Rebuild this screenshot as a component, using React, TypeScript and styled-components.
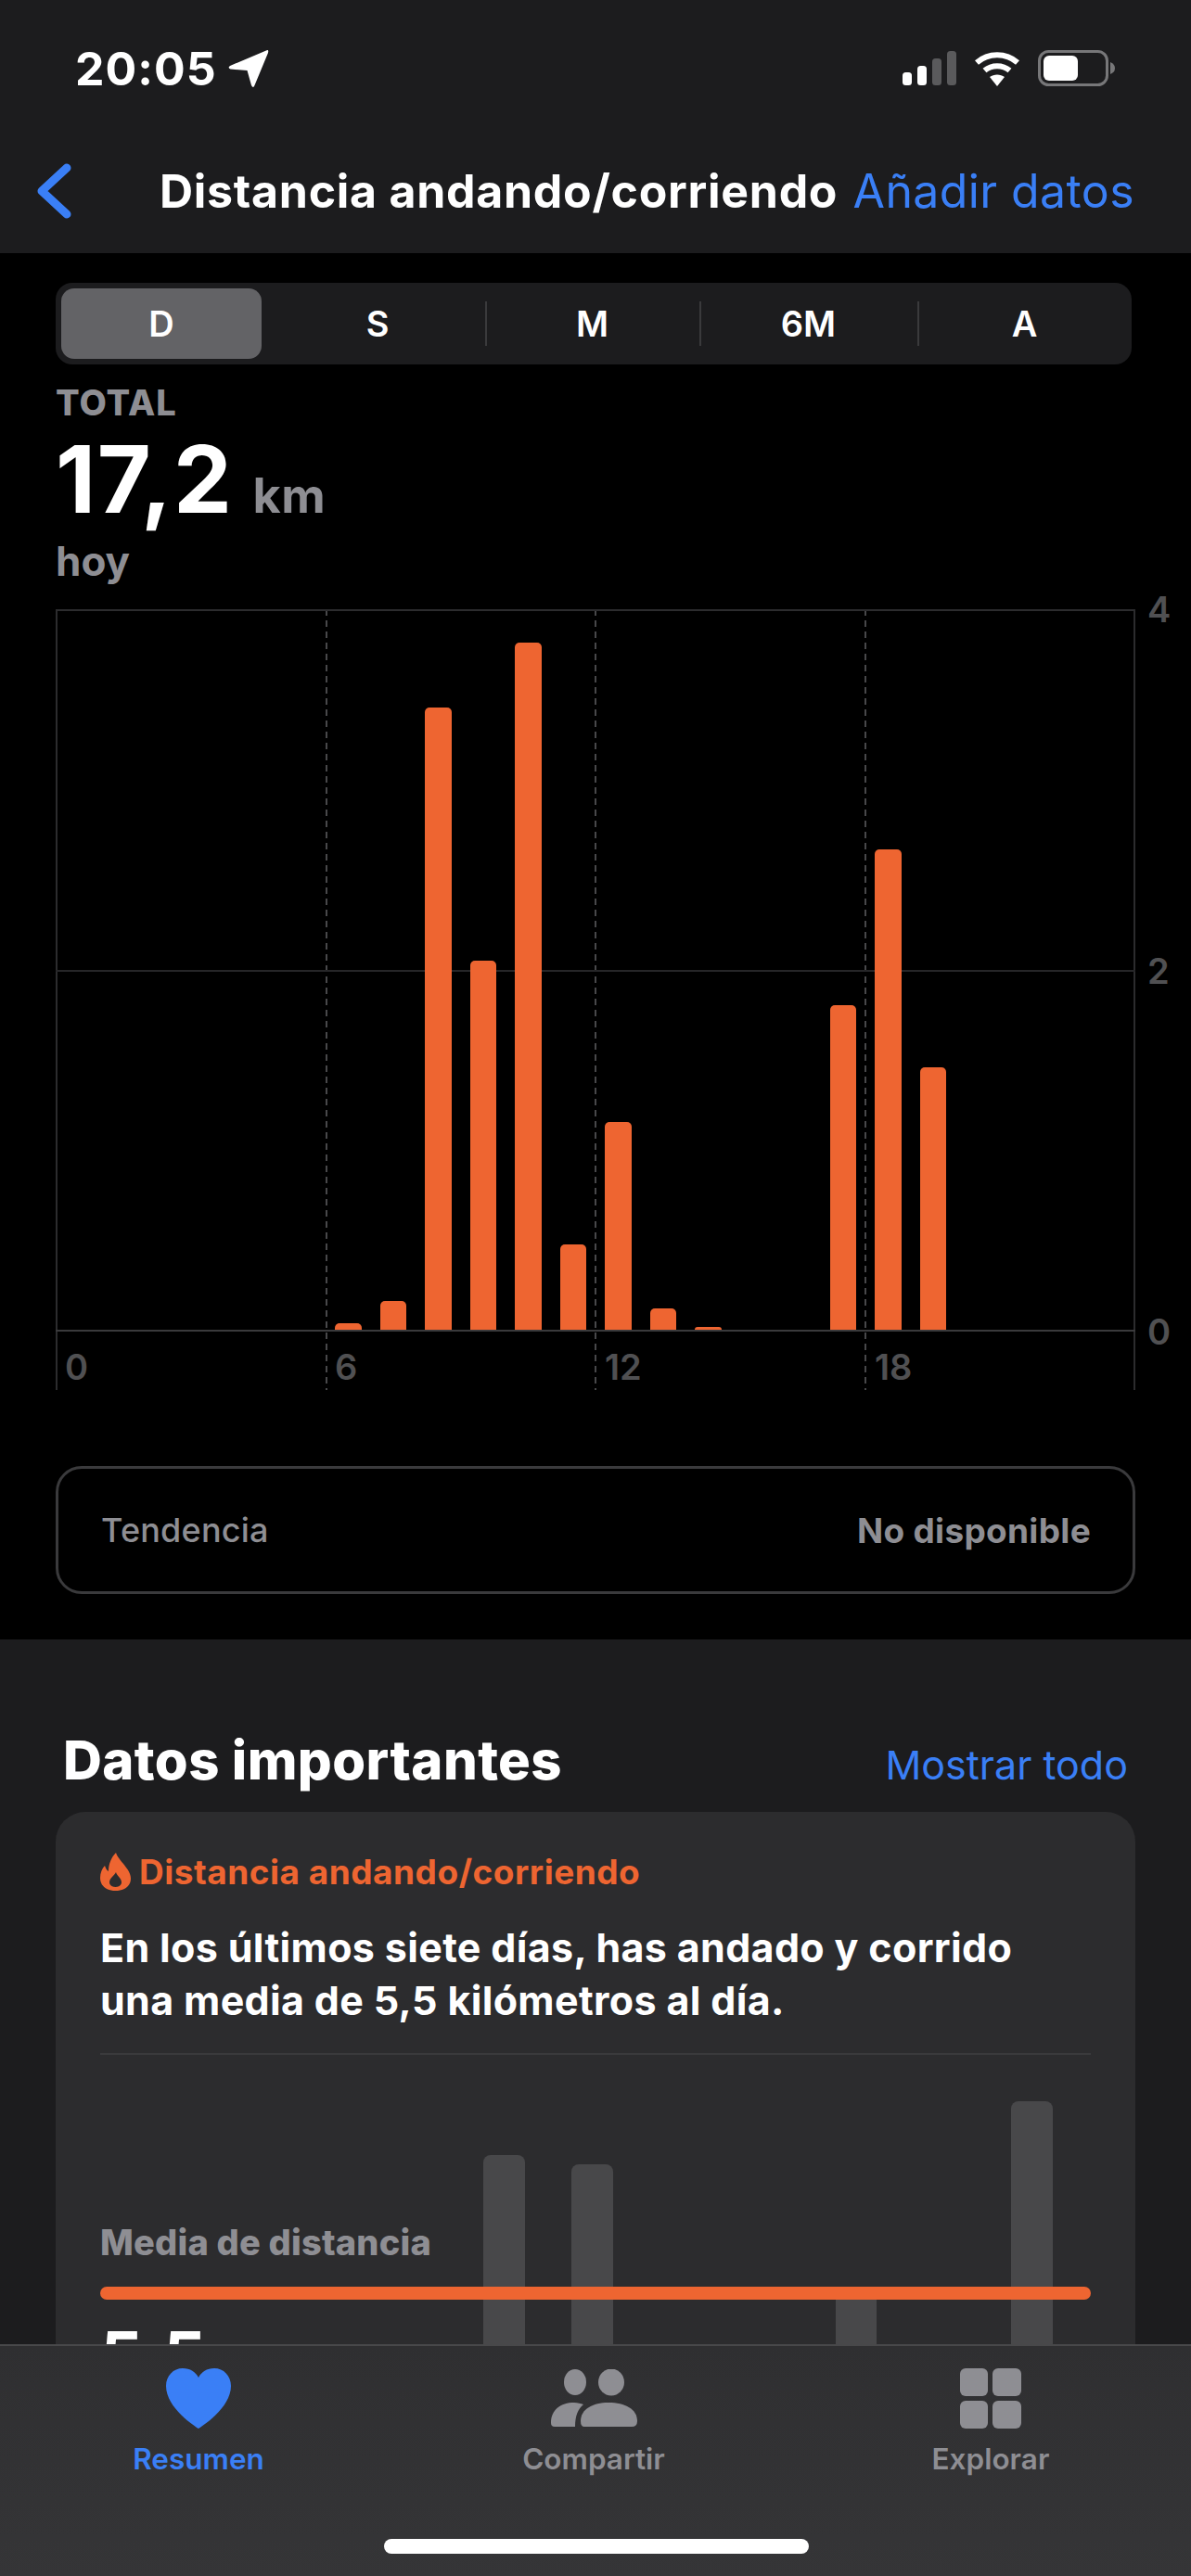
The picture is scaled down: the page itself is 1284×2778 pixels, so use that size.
import React from "react";
import styled, { createGlobalStyle } from "styled-components";

const BLUE = "#3a7ff6";
const ORANGE = "#ee6531";

// Styles
const GlobalStyle = createGlobalStyle`
  html, body {
    margin: 0;
    padding: 0;
    background: #000;
  }
  body {
    font-family: Inter, "Liberation Sans", sans-serif;
  }
`;

const Page = styled.div`
  position: relative;
  width: 1284px;
  height: 2778px;
  overflow: hidden;
  background: #000;
  color: #fff;
`;

const Header = styled.header`
  height: 273px;
  box-sizing: border-box;
  background: #1c1c1e;
  padding-top: 53px;
`;

const StatusBar = styled.div`
  display: flex;
  justify-content: space-between;
  align-items: center;
  height: 41px;
  padding: 0 81px 0 81px;
`;

const StatusLeft = styled.div`
  display: flex;
  align-items: center;
  gap: 12px;
`;

const StatusTime = styled.span`
  font-size: 50px;
  font-weight: 700;
  letter-spacing: 1px;
`;

const StatusIcons = styled.div`
  display: flex;
  align-items: center;
  gap: 19px;
`;

const NavBar = styled.nav`
  display: flex;
  align-items: center;
  height: 60px;
  margin-top: 82px;
  padding: 0 61px 0 39px;
`;

const NavTitle = styled.h1`
  margin: 0 0 0 95px;
  font-size: 50px;
  font-weight: 700;
  letter-spacing: 0.72px;
  white-space: nowrap;
`;

const NavAction = styled.span`
  margin-left: auto;
  font-size: 50px;
  letter-spacing: 0.4px;
  color: ${BLUE};
  white-space: nowrap;
`;

const ChartSection = styled.section`
  height: 1495px;
  box-sizing: border-box;
  padding: 32px 60px 0;
`;

const Segments = styled.div`
  display: grid;
  grid-template-columns: 231px 232px 231px 235px 231px;
  height: 88px;
  width: 1160px;
  box-sizing: border-box;
  padding: 6px 0;
  background: #1c1c1e;
  border-radius: 18px;
`;

const Segment = styled.div<{ $active?: boolean; $divider?: boolean }>`
  position: relative;
  display: flex;
  align-items: center;
  justify-content: center;
  margin: ${(p) => (p.$active ? "0 9px 0 6px" : "0")};
  font-size: 38px;
  font-weight: 600;
  border-radius: 14px;
  background: ${(p) => (p.$active ? "#636366" : "transparent")};

  &::before {
    content: "";
    display: ${(p) => (p.$divider ? "block" : "none")};
    position: absolute;
    left: 0;
    top: 14px;
    bottom: 14px;
    width: 2px;
    background: #3a3a3c;
  }
`;

const TotalLabel = styled.div`
  margin-top: 20px;
  font-size: 38px;
  line-height: 42px;
  font-weight: 800;
  letter-spacing: 1px;
  color: #8e8e93;
`;

const TotalValue = styled.div`
  display: flex;
  align-items: baseline;
  gap: 21px;
  height: 100px;
  margin-top: 12px;
  font-size: 100px;
  line-height: 100px;
  font-weight: 700;
  letter-spacing: 1.6px;
`;

const TotalUnit = styled.span`
  font-size: 52px;
  font-weight: 700;
  letter-spacing: 0.4px;
  color: #8e8e93;
`;

const TotalPeriod = styled.div`
  margin-top: 13px;
  font-size: 44px;
  line-height: 50px;
  font-weight: 700;
  color: #8e8e93;
`;

const ChartRow = styled.div`
  display: flex;
  margin-top: 27px;
`;

const ChartArea = styled.div`
  position: relative;
  width: 1164px;
  height: 842px;
`;

const GridLayer = styled.div`
  position: absolute;
  inset: 0;
  display: grid;
  grid-template-columns: repeat(4, 1fr);
  border-right: 2px solid #2c2c2e;
`;

const GridColumn = styled.div<{ $solid?: boolean }>`
  background: ${(p) =>
    p.$solid
      ? "linear-gradient(#2c2c2e, #2c2c2e)"
      : "repeating-linear-gradient(to bottom, #48484a 0 7px, transparent 7px 12px)"};
  background-size: 2px 100%;
  background-repeat: no-repeat;
`;

const Plot = styled.div`
  position: relative;
  display: grid;
  grid-template-columns: repeat(24, 48.5px);
  align-items: end;
  height: 779px;
  box-sizing: border-box;
  border-top: 2px solid #2c2c2e;
  border-bottom: 2px solid #3a3a3c;

  &::after {
    content: "";
    position: absolute;
    left: 0;
    right: 0;
    top: 387px;
    height: 2px;
    background: #262628;
  }
`;

const Bar = styled.div<{ $height: number }>`
  position: relative;
  z-index: 1;
  height: ${(p) => p.$height}px;
  margin: 0 10px;
  background: ${ORANGE};
  border-radius: 5px 5px 0 0;
`;

const AxisLabels = styled.div`
  position: relative;
  display: grid;
  grid-template-columns: repeat(4, 1fr);
  padding-top: 16px;
`;

const AxisLabel = styled.span`
  padding-left: 10px;
  font-size: 38px;
  line-height: 44px;
  font-weight: 600;
  color: #505052;
`;

const YLabels = styled.div`
  display: flex;
  flex-direction: column;
  justify-content: space-between;
  height: 823px;
  margin: -22px 0 0 13px;
`;

const YLabel = styled.span`
  font-size: 38px;
  line-height: 44px;
  font-weight: 600;
  color: #505052;
`;

const TrendCard = styled.div`
  display: flex;
  justify-content: space-between;
  align-items: center;
  width: 1164px;
  height: 138px;
  box-sizing: border-box;
  margin-top: 82px;
  padding: 0 45px 0 46px;
  border: 3px solid #3a3a3c;
  border-radius: 28px;
  font-size: 36px;
  font-weight: 500;
  letter-spacing: 0.2px;
  color: #8e8e93;
`;

const TrendValue = styled.span`
  font-size: 37px;
  font-weight: 700;
  letter-spacing: 0.3px;
`;

const Highlights = styled.section`
  height: 1010px;
  box-sizing: border-box;
  background: #1c1c1e;
  padding: 96px 60px 0;
`;

const HighlightsHeader = styled.div`
  display: flex;
  justify-content: space-between;
  align-items: baseline;
  height: 90px;
  padding: 0 8px;
`;

const HighlightsTitle = styled.h2`
  margin: 0;
  font-size: 58px;
  line-height: 68px;
  font-weight: 800;
  letter-spacing: 0.4px;
`;

const ShowAll = styled.span`
  font-size: 43px;
  color: ${BLUE};
`;

const HighlightCard = styled.article`
  height: 900px;
  box-sizing: border-box;
  padding: 40px 48px 0;
  background: #2c2c2e;
  border-radius: 32px;
`;

const CardKicker = styled.div`
  display: flex;
  align-items: center;
  gap: 9px;
  height: 48px;
  font-size: 37px;
  font-weight: 700;
  letter-spacing: 0.5px;
  color: ${ORANGE};
`;

const CardBody = styled.p`
  margin: 30px 0 0;
  font-size: 43px;
  line-height: 57px;
  font-weight: 700;
  letter-spacing: 0.34px;
`;

const CardDivider = styled.div`
  height: 2px;
  margin-top: 28px;
  background: #3a3a3c;
`;

const MiniChart = styled.div`
  position: relative;
  height: 560px;
`;

const MiniBars = styled.div`
  position: absolute;
  top: 0;
  right: 16px;
  display: grid;
  grid-template-columns: repeat(7, 94.8px);
  align-items: end;
  height: 386px;
`;

const MiniBar = styled.div<{ $height: number }>`
  height: ${(p) => p.$height}px;
  margin: 0 25px;
  background: #48484a;
  border-radius: 8px 8px 0 0;
`;

const MiniLabel = styled.div`
  position: relative;
  padding-top: 180px;
  font-size: 38px;
  line-height: 44px;
  font-weight: 800;
  letter-spacing: 0.2px;
  color: #8e8e93;
`;

const AverageLine = styled.div`
  position: relative;
  height: 14px;
  margin-top: 26px;
  background: ${ORANGE};
  border-radius: 7px;
`;

const AverageValue = styled.div`
  position: relative;
  margin-top: 16px;
  font-size: 72px;
  line-height: 88px;
  font-weight: 700;
`;

const TabBar = styled.nav`
  position: absolute;
  left: 0;
  right: 0;
  bottom: 0;
  height: 250px;
  box-sizing: border-box;
  display: grid;
  grid-template-columns: 428px 424px 432px;
  background: linear-gradient(#2f2f31, #353537);
  border-top: 2px solid #48484a;
`;

const Tab = styled.div<{ $active?: boolean }>`
  display: flex;
  flex-direction: column;
  align-items: center;
  padding-top: 22px;
  color: ${(p) => (p.$active ? BLUE : "#8e8e93")};
`;

const TabIcon = styled.div`
  display: flex;
  align-items: center;
  justify-content: center;
  height: 68px;
`;

const TabLabel = styled.span`
  margin-top: 14px;
  font-size: 31.5px;
  line-height: 36px;
  font-weight: 600;
`;

const HomeIndicator = styled.div`
  position: absolute;
  left: 414px;
  bottom: 24px;
  width: 458px;
  height: 16px;
  background: #fff;
  border-radius: 8px;
`;

// Icons
const LocationArrow = () => (
  <svg width="44" height="42" viewBox="0 0 44 42">
    <path d="M41 1.5 Q44 0 43 4 L28.5 39 Q27 43 25 39 L20.5 23 L2.5 21.5 Q-1 20 2 18 Z" fill="#fff" />
  </svg>
);

const SignalIcon = () => (
  <svg width="58" height="38" viewBox="0 0 58 38">
    <rect x="0" y="23" width="10" height="14" rx="3.5" fill="#fff" />
    <rect x="16" y="16" width="10" height="21" rx="3.5" fill="#fff" />
    <rect x="32" y="8" width="10" height="29" rx="3.5" fill="#5a5a5c" />
    <rect x="48" y="0" width="10" height="37" rx="3.5" fill="#5a5a5c" />
  </svg>
);

const WifiIcon = () => (
  <svg width="50" height="38" viewBox="0 0 50 38" fill="none">
    <path d="M3 12.5 C15.5 1.5 34.5 1.5 47 12.5" stroke="#fff" strokeWidth="6" strokeLinecap="butt" />
    <path d="M11.5 21 C19 14.5 31 14.5 38.5 21" stroke="#fff" strokeWidth="6" strokeLinecap="butt" />
    <path d="M25 38 L17 28 C21.5 24.5 28.5 24.5 33 28 Z" fill="#fff" />
  </svg>
);

const BatteryIcon = () => (
  <svg width="84" height="40" viewBox="0 0 84 40">
    <rect x="1.5" y="1.5" width="73" height="36" rx="10" fill="none" stroke="#777779" strokeWidth="3" />
    <rect x="6" y="6" width="37" height="27" rx="6" fill="#fff" />
    <path d="M78 13 Q83 15 83 19.5 Q83 24 78 26 Z" fill="#777779" />
  </svg>
);

const BackChevron = () => (
  <svg width="38" height="60" viewBox="0 0 38 60" fill="none">
    <path d="M33 5 L6 30 L33 55" stroke={BLUE} strokeWidth="9" strokeLinecap="round" strokeLinejoin="round" />
  </svg>
);

const FlameIcon = () => (
  <svg width="33" height="41" viewBox="0 0 33 41">
    <path
      fillRule="evenodd"
      fill={ORANGE}
      d="M17 0 C19 6 24 10 28 16 C32 21 33 25 33 28 C33 36 26 41 16.5 41 C7 41 0 36 0 27 C0 22 2 17 5 14 C6 17 7 19 9 20 C9 12 12 5 17 0 Z M17 21 C18 25 23 27 23 32 C23 35 20 37 16.5 37 C13 37 10 35 10 32 C10 27 15 25 17 21 Z"
    />
  </svg>
);

const HeartIcon = () => (
  <svg width="70" height="65" viewBox="0 0 70 65">
    <path
      fill={BLUE}
      d="M35 65 C32 63 0 43 0 19 C0 8 8 0 18 0 C26 0 32 4 35 10 C38 4 44 0 52 0 C62 0 70 8 70 19 C70 43 38 63 35 65 Z"
    />
  </svg>
);

const PeopleIcon = () => (
  <svg width="93" height="62" viewBox="0 0 93 62" fill="#8e8e93">
    <ellipse cx="26" cy="14" rx="12" ry="14" />
    <ellipse cx="65" cy="14" rx="14" ry="14.5" />
    <path d="M0 58 C0 44 10 36 25 36 C29 36 32 37 35 38 C29 43 26 50 26 62 L4 62 Q0 62 0 58 Z" />
    <path d="M32 56 C32 43 45 36 62 36 C80 36 93 43 93 56 Q93 62 87 62 L36 62 Q32 62 32 56 Z" />
  </svg>
);

const GridIcon = () => (
  <svg width="66" height="65" viewBox="0 0 66 65" fill="#8e8e93">
    <rect x="0" y="0" width="30" height="30" rx="6" />
    <rect x="35" y="0" width="31" height="30" rx="6" />
    <rect x="0" y="35" width="30" height="30" rx="6" />
    <rect x="35" y="35" width="31" height="30" rx="6" />
  </svg>
);

// Data
const hourly = [0, 0, 0, 0, 0, 0, 7, 31, 671, 398, 741, 92, 224, 23, 3, 0, 0, 350, 518, 283, 0, 0, 0, 0];
const weekly = [278, 268, 0, 0, 130, 0, 336];
const periods = ["D", "S", "M", "6M", "A"];

// Component
const App: React.FC = () => {
  return (
    <Page>
      <GlobalStyle />
      <Header>
        <StatusBar>
          <StatusLeft>
            <StatusTime>20:05</StatusTime>
            <LocationArrow />
          </StatusLeft>
          <StatusIcons>
            <SignalIcon />
            <WifiIcon />
            <BatteryIcon />
          </StatusIcons>
        </StatusBar>
        <NavBar>
          <BackChevron />
          <NavTitle>Distancia andando/corriendo</NavTitle>
          <NavAction>Añadir datos</NavAction>
        </NavBar>
      </Header>

      <ChartSection>
        <Segments>
          {periods.map((label, i) => (
            <Segment key={label} $active={i === 0} $divider={i > 1}>
              {label}
            </Segment>
          ))}
        </Segments>
        <TotalLabel>TOTAL</TotalLabel>
        <TotalValue>
          17,2
          <TotalUnit>km</TotalUnit>
        </TotalValue>
        <TotalPeriod>hoy</TotalPeriod>

        <ChartRow>
          <ChartArea>
            <GridLayer>
              <GridColumn $solid />
              <GridColumn />
              <GridColumn />
              <GridColumn />
            </GridLayer>
            <Plot>
              {hourly.map((value, hour) => (
                <Bar key={hour} $height={value} />
              ))}
            </Plot>
            <AxisLabels>
              <AxisLabel>0</AxisLabel>
              <AxisLabel>6</AxisLabel>
              <AxisLabel>12</AxisLabel>
              <AxisLabel>18</AxisLabel>
            </AxisLabels>
          </ChartArea>
          <YLabels>
            <YLabel>4</YLabel>
            <YLabel>2</YLabel>
            <YLabel>0</YLabel>
          </YLabels>
        </ChartRow>

        <TrendCard>
          <span>Tendencia</span>
          <TrendValue>No disponible</TrendValue>
        </TrendCard>
      </ChartSection>

      <Highlights>
        <HighlightsHeader>
          <HighlightsTitle>Datos importantes</HighlightsTitle>
          <ShowAll>Mostrar todo</ShowAll>
        </HighlightsHeader>
        <HighlightCard>
          <CardKicker>
            <FlameIcon />
            Distancia andando/corriendo
          </CardKicker>
          <CardBody>
            En los últimos siete días, has andado y corrido
            <br />
            una media de 5,5 kilómetros al día.
          </CardBody>
          <CardDivider />
          <MiniChart>
            <MiniBars>
              {weekly.map((value, day) => (
                <MiniBar key={day} $height={value} />
              ))}
            </MiniBars>
            <MiniLabel>Media de distancia</MiniLabel>
            <AverageLine />
            <AverageValue>5,5</AverageValue>
          </MiniChart>
        </HighlightCard>
      </Highlights>

      <TabBar>
        <Tab $active>
          <TabIcon>
            <HeartIcon />
          </TabIcon>
          <TabLabel>Resumen</TabLabel>
        </Tab>
        <Tab>
          <TabIcon>
            <PeopleIcon />
          </TabIcon>
          <TabLabel>Compartir</TabLabel>
        </Tab>
        <Tab>
          <TabIcon>
            <GridIcon />
          </TabIcon>
          <TabLabel>Explorar</TabLabel>
        </Tab>
      </TabBar>
      <HomeIndicator />
    </Page>
  );
};

export default App;
